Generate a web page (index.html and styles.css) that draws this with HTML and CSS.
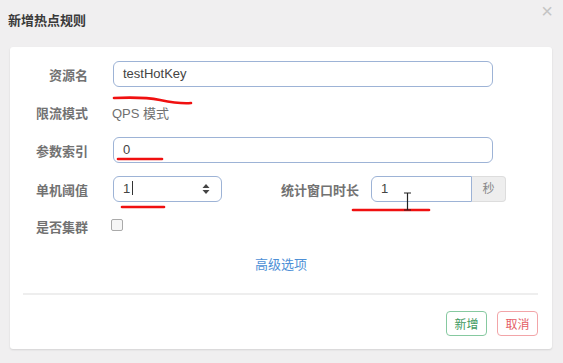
FILE: index.html
```html
<!DOCTYPE html>
<html lang="zh-CN">
  <head>
    <meta charset="UTF-8" />
    <meta name="viewport" content="width=device-width, initial-scale=1.0" />
    <title>新增热点规则</title>
    <link rel="stylesheet" href="styles.css">
  </head>
  <body>
    <div class="dialog">
      <div class="dialog-header">
        <h4 class="dialog-title">新增热点规则</h4>
        <span class="close">&times;</span>
      </div>
      <div class="card">
        <div class="form-group">
          <label class="control-label">资源名</label>
          <div class="field wide">
            <div class="input">testHotKey</div>
          </div>
        </div>
        <div class="form-group static">
          <label class="control-label">限流模式</label>
          <div class="static-text">QPS 模式</div>
        </div>
        <div class="form-group">
          <label class="control-label">参数索引</label>
          <div class="field wide">
            <div class="input">0</div>
          </div>
        </div>
        <div class="form-group">
          <label class="control-label">单机阈值</label>
          <div class="input number">
            <span>1<i class="caret"></i></span>
            <svg class="spin" width="8" height="12" viewBox="0 0 8 12">
              <path d="M4 1 L7.5 5 L0.5 5 Z M4 11 L7.5 7 L0.5 7 Z" fill="#444" />
            </svg>
          </div>
          <label class="control-label inline">统计窗口时长</label>
          <div class="input-group">
            <div class="input short">1</div>
            <span class="addon">秒</span>
          </div>
        </div>
        <div class="form-group static check-row">
          <label class="control-label">是否集群</label>
          <span class="checkbox"></span>
        </div>
        <div class="advanced"><a href="#">高级选项</a></div>
        <div class="footer">
          <button class="btn btn-add">新增</button>
          <button class="btn btn-cancel">取消</button>
        </div>
      </div>

      <!-- hand drawn marks over the screenshot -->
      <svg class="marks" width="563" height="363" viewBox="0 0 563 363">
        <g fill="none" stroke="#f01010" stroke-width="2.6" stroke-linecap="round">
          <path d="M114 98 C 135 97, 150 98, 160 100 S 180 104, 191 103" />
          <path d="M118 159 L 162 159" />
          <path d="M122 207 L 164 207" />
          <path d="M353 210 L 429 210" />
        </g>
        <g fill="none" stroke="#222" stroke-width="1.2">
          <path d="M404 193 L 411 193 M407.5 193 L 407.5 210 M404 210 L 411 210" />
        </g>
      </svg>
    </div>
  </body>
</html>
```

FILE: styles.css
```css
body {
  margin: 0;
  padding: 0;
  background-color: #f0eff0;
  font-family: "Liberation Sans", Arial, "Noto Sans CJK SC", sans-serif;
  font-size: 13px;
  color: #555;
}
.dialog {
  position: relative;
  width: 563px;
  height: 363px;
}
.dialog-header {
  height: 47px;
  position: relative;
}
.dialog-title {
  margin: 0;
  padding: 12px 0 0 8px;
  font-size: 13px;
  font-weight: 700;
  color: #3a3a3a;
  line-height: 18px;
}
.close {
  position: absolute;
  top: 1px;
  right: 10px;
  font-size: 20px;
  color: #c4c4c4;
  line-height: 20px;
}
.card {
  margin-left: 10px;
  width: 542px;
  height: 302px;
  box-sizing: border-box;
  background: #fff;
  border-radius: 3px;
  box-shadow: 0 1px 2px rgba(0, 0, 0, 0.12);
  padding-top: 14px;
}
.form-group {
  display: flex;
  align-items: center;
  height: 26px;
  margin-bottom: 13px;
}
.form-group.static {
  height: 24px;
  margin-top: 2px;
  margin-bottom: 13px;
}
.control-label {
  width: 78px;
  text-align: right;
  font-weight: 700;
  color: #727272;
  margin-right: 25px;
  flex-shrink: 0;
}
.control-label.inline {
  width: auto;
  margin-left: 59px;
  margin-right: 12px;
}
.static-text {
  color: #707070;
  margin-left: -1px;
}
.field.wide {
  width: 380px;
}
.input {
  height: 26px;
  box-sizing: border-box;
  border: 1px solid #9db3d6;
  border-radius: 6px;
  padding: 0 9px;
  line-height: 24px;
  color: #444;
  background: #fff;
}
.input.number {
  width: 109px;
  display: flex;
  justify-content: space-between;
  align-items: center;
  padding-right: 11px;
}
.caret {
  display: inline-block;
  width: 1px;
  height: 14px;
  background: #333;
  margin-left: 2px;
  vertical-align: -2px;
}
.input-group {
  display: flex;
}
.input.short {
  width: 101px;
  border-radius: 6px 0 0 6px;
}
.addon {
  width: 34px;
  height: 26px;
  box-sizing: border-box;
  border: 1px solid #ddd;
  border-left: none;
  border-radius: 0 4px 4px 0;
  background: #eee;
  color: #888;
  font-size: 12px;
  text-align: center;
  line-height: 24px;
}
.check-row {
  align-items: flex-start;
  margin-top: 0;
}
.check-row .control-label {
  line-height: 24px;
  margin-top: 1px;
}
.checkbox {
  width: 10px;
  height: 10px;
  border: 1px solid #aaa;
  border-radius: 2px;
  background: #f6f6f6;
  margin-top: 4px;
  margin-left: -2px;
}
.advanced {
  text-align: center;
  margin-top: 10px;
  height: 26px;
  line-height: 26px;
}
.advanced a {
  color: #4d8fd6;
  text-decoration: none;
}
.footer {
  margin: 15px 14px 0 13px;
  border-top: 2px solid #eee;
  padding-top: 16px;
  display: flex;
  justify-content: flex-end;
  gap: 10px;
}
.btn {
  height: 25px;
  width: 41px;
  padding: 0;
  background: #fff;
  border-radius: 4px;
  font-family: "Liberation Sans", "Noto Sans CJK SC", sans-serif;
  font-size: 12px;
  cursor: pointer;
}
.btn-add {
  border: 1px solid #86c9a0;
  color: #3f9a62;
}
.btn-cancel {
  border: 1px solid #f2a5a8;
  color: #e45c64;
}
.marks {
  position: absolute;
  left: 0;
  top: 0;
  pointer-events: none;
}
```
